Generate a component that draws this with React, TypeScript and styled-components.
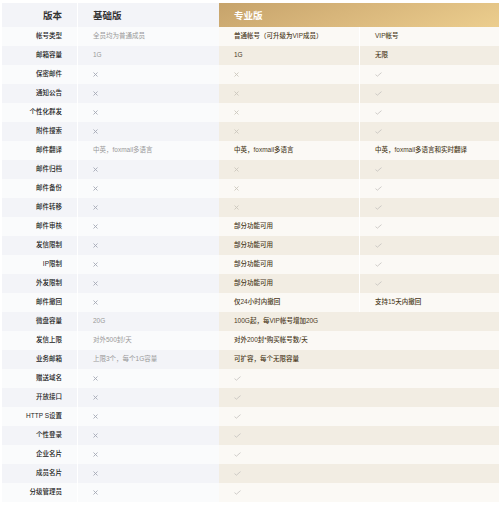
import React from "react";
import styled, { createGlobalStyle, css } from "styled-components";

const Global = createGlobalStyle`
  html, body { margin: 0; padding: 0; background: #fff; }
  body { font-family: "Liberation Sans", "Noto Sans CJK SC", sans-serif; }
`;

const Page = styled.div`
  width: 499px;
  height: 512px;
  overflow: hidden;
  padding: 3px 0 0 2px;
  box-sizing: border-box;
`;

const Table = styled.div`
  width: 498px;
  display: flex;
  flex-direction: column;
`;

const Row = styled.div<{ $h?: number }>`
  display: grid;
  grid-template-columns: 76px 141px 141px 140px;
  height: ${(p) => p.$h ?? 19}px;
`;

type Zone = "label" | "basic" | "pro" | "vip";

const basicBg = (alt: boolean) => (alt ? "#f3f4f8" : "#fafbfc");
const proBg = (alt: boolean) => (alt ? "#f2ede3" : "#fbf9f5");

const Cell = styled.div<{ $zone: Zone; $alt: boolean; $span?: boolean }>`
  display: flex;
  align-items: center;
  box-sizing: border-box;
  font-size: 6.5px;
  line-height: 1;
  white-space: nowrap;
  overflow: hidden;
  ${(p) => p.$span && css`grid-column: span 2;`}
  ${(p) =>
    p.$zone === "label" &&
    css`
      justify-content: flex-end;
      padding-right: 15px;
      background: ${basicBg(p.$alt)};
      border-right: 1px solid #fff;
      color: #222;
      font-weight: 500;
    `}
  ${(p) =>
    p.$zone === "basic" &&
    css`
      padding-left: 15px;
      background: ${basicBg(p.$alt)};
      color: #999;
    `}
  ${(p) =>
    (p.$zone === "pro" || p.$zone === "vip") &&
    css`
      padding-left: 15px;
      background: ${proBg(p.$alt)};
      color: #4a3a1c;
      font-weight: 500;
    `}
  ${(p) =>
    p.$zone === "pro" &&
    !p.$span &&
    css`
      border-right: 1px solid #fff;
    `}
`;

const HeadLabel = styled.div`
  display: flex;
  align-items: center;
  justify-content: flex-end;
  padding-right: 15px;
  background: #f3f4f8;
  border-right: 1px solid #fff;
  font-size: 9.5px;
  font-weight: bold;
  color: #333;
`;

const HeadBasic = styled.div`
  display: flex;
  align-items: center;
  padding-left: 15px;
  background: #f3f4f8;
  font-size: 9.5px;
  font-weight: bold;
  color: #333;
`;

const HeadPro = styled.div`
  grid-column: span 2;
  display: flex;
  align-items: center;
  padding-left: 15px;
  background: linear-gradient(160deg, #c6a36b 0%, #d8b67b 45%, #ecce8e 100%);
  font-size: 9.5px;
  font-weight: bold;
  color: #fff;
`;

const Cross = ({ color }: { color: string }) => (
  <svg width="5" height="5" viewBox="0 0 5 5">
    <path d="M0.5 0.5 L4.5 4.5 M4.5 0.5 L0.5 4.5" stroke={color} strokeWidth="0.9" fill="none" />
  </svg>
);

const Check = () => (
  <svg width="7" height="5" viewBox="0 0 7 5">
    <path d="M0.5 2.6 L2.4 4.2 L6.5 0.6" stroke="#c4c2be" strokeWidth="0.8" fill="none" />
  </svg>
);

type V = string | "x" | "v" | null;
type RowData = { label: string; basic: V; pro: V; vip?: V; span?: boolean };

const rows: RowData[] = [
  { label: "帐号类型", basic: "全员均为普通成员", pro: "普通帐号（可升级为VIP成员）", vip: "VIP帐号" },
  { label: "邮箱容量", basic: "1G", pro: "1G", vip: "无限" },
  { label: "保密邮件", basic: "x", pro: "x", vip: "v" },
  { label: "通知公告", basic: "x", pro: "x", vip: "v" },
  { label: "个性化群发", basic: "x", pro: "x", vip: "v" },
  { label: "附件搜索", basic: "x", pro: "x", vip: "v" },
  { label: "邮件翻译", basic: "中英，foxmail多语言", pro: "中英，foxmail多语言", vip: "中英，foxmail多语言和实时翻译" },
  { label: "邮件归档", basic: "x", pro: "x", vip: "v" },
  { label: "邮件备份", basic: "x", pro: "x", vip: "v" },
  { label: "邮件转移", basic: "x", pro: "x", vip: "v" },
  { label: "邮件审核", basic: "x", pro: "部分功能可用", vip: "v" },
  { label: "发信限制", basic: "x", pro: "部分功能可用", vip: "v" },
  { label: "IP限制", basic: "x", pro: "部分功能可用", vip: "v" },
  { label: "外发限制", basic: "x", pro: "部分功能可用", vip: "v" },
  { label: "邮件撤回", basic: "x", pro: "仅24小时内撤回", vip: "支持15天内撤回" },
  { label: "微盘容量", basic: "20G", pro: "100G起，每VIP帐号增加20G", span: true },
  { label: "发信上限", basic: "对外500封/天", pro: "对外200封*购买帐号数/天", span: true },
  { label: "业务邮箱", basic: "上限3个，每个1G容量", pro: "可扩容，每个无限容量", span: true },
  { label: "赠送域名", basic: "x", pro: "v", span: true },
  { label: "开放接口", basic: "x", pro: "v", span: true },
  { label: "HTTP S设置", basic: "x", pro: "v", span: true },
  { label: "个性登录", basic: "x", pro: "v", span: true },
  { label: "企业名片", basic: "x", pro: "v", span: true },
  { label: "成员名片", basic: "x", pro: "v", span: true },
  { label: "分级管理员", basic: "x", pro: "v", span: true },
];

const renderValue = (v: V, zone: Zone) => {
  if (v === "x") return <Cross color={zone === "basic" ? "#a4a8b4" : "#cbc6bc"} />;
  if (v === "v") return <Check />;
  return v;
};

export default function App() {
  return (
    <>
      <Global />
      <Page>
        <Table>
          <Row $h={24}>
            <HeadLabel>版本</HeadLabel>
            <HeadBasic>基础版</HeadBasic>
            <HeadPro>专业版</HeadPro>
          </Row>
          {rows.map((r, i) => {
            const alt = i % 2 === 1;
            return (
              <Row key={r.label}>
                <Cell $zone="label" $alt={alt}>{r.label}</Cell>
                <Cell $zone="basic" $alt={alt}>{renderValue(r.basic, "basic")}</Cell>
                <Cell $zone="pro" $alt={alt} $span={r.span}>{renderValue(r.pro, "pro")}</Cell>
                {!r.span && (
                  <Cell $zone="vip" $alt={alt}>{renderValue(r.vip ?? null, "vip")}</Cell>
                )}
              </Row>
            );
          })}
        </Table>
      </Page>
    </>
  );
}
